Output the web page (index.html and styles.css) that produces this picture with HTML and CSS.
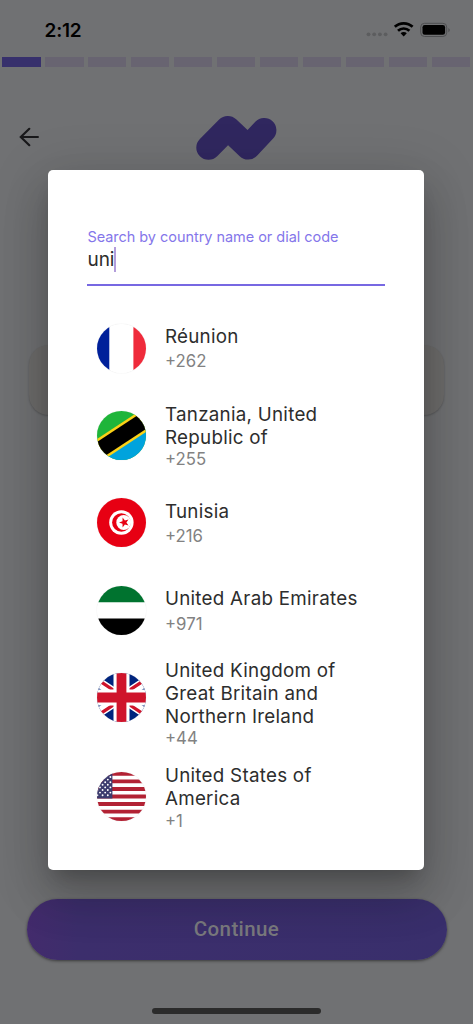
FILE: index.html
```html
<!DOCTYPE html>
<html lang="en">
<head>
<meta charset="utf-8">
<title>Select country</title>
<link rel="stylesheet" href="styles.css">
</head>
<body>
<div class="screen">
  <header class="status">
    <span class="time">2:12</span>
    <svg class="status-icons" width="90" height="20" viewBox="0 0 90 20">
      <g fill="#5c5d5f"><circle cx="5.5" cy="15.3" r="1.9"/><circle cx="11.2" cy="15.3" r="1.9"/><circle cx="16.9" cy="15.3" r="1.9"/><circle cx="22.6" cy="15.3" r="1.9"/></g>
      <g fill="none" stroke="#000" stroke-width="2.7"><path d="M31.8 7.8a13.1 13.1 0 0 1 17.8 0"/><path d="M35 11.8a8.2 8.2 0 0 1 11.4 0"/></g>
      <path d="M37.6 14.2a4.4 4.4 0 0 1 6.2 0L40.7 17.4z"/>
      <rect x="57.7" y="4.3" width="26" height="13.2" rx="3.8" fill="none" stroke="#4e4f51"/>
      <rect x="59.5" y="6" width="22.6" height="9.8" rx="2.2"/>
      <path d="M85.4 9v4.2c1.8-.8 1.8-3.4 0-4.2z" fill="#4e4f51"/>
    </svg>
  </header>
  <div class="progress"><i class="done"></i><i></i><i></i><i></i><i></i><i></i><i></i><i></i><i></i><i></i><i></i></div>
  <nav class="topbar">
    <svg class="back" width="22" height="22" viewBox="0 0 22 22" fill="none" stroke="#18181a" stroke-width="2.2" stroke-linecap="round" stroke-linejoin="round"><path d="M19.9 11H2.6M11.3 2.8L2.8 11l8.5 8.2"/></svg>
    <svg class="logo" width="82" height="46" viewBox="0 0 82 46" fill="none" stroke="#30275f" stroke-width="24.4" stroke-linecap="round" stroke-linejoin="round"><path d="M13.5 32.6L32.8 13.2L53.1 32.4L69.2 15.2"/></svg>
  </nav>
  <div class="phone-field"></div>
  <button class="continue">Continue</button>
  <div class="home-bar"></div>

  <section class="dialog">
    <div class="search">
      <label class="search-label">Search by country name or dial code</label>
      <div class="search-value"><span>uni</span><i class="caret"></i></div>
    </div>
    <ul class="countries">
      <li class="row single">
        <svg class="flag" viewBox="0 0 49 49"><path fill="#fff" d="M0 0h49v49H0z"/><path fill="#00209a" d="M0 0h12.3v49H0z"/><path fill="#ef2b3b" d="M36.4 0H49v49H36.4z"/></svg>
        <div><p class="name">Réunion</p><p class="code">+262</p></div>
      </li>
      <li class="row double">
        <svg class="flag" viewBox="0 0 49 49"><path fill="#1fb53a" d="M0 0h49v49H0z"/><path fill="#00a3dd" d="M49 8v41H0V41z"/><path stroke="#fcd116" stroke-width="21" d="M-8 45.9L57 3.1"/><path stroke="#000" stroke-width="16" d="M-8 45.9L57 3.1"/></svg>
        <div><p class="name">Tanzania, United<br>Republic of</p><p class="code">+255</p></div>
      </li>
      <li class="row single">
        <svg class="flag" viewBox="0 0 49 49"><path fill="#e70013" d="M0 0h49v49H0z"/><circle cx="24.4" cy="24.5" r="12.2" fill="#fff"/><circle cx="24.4" cy="24.5" r="9.3" fill="#e70013"/><circle cx="26.7" cy="24.5" r="7.4" fill="#fff"/><path fill="#e70013" d="M22 24.5l3.5-1.2.1-3.8 2.3 3 3.6-1.1-2.1 3.1 2.1 3.1-3.6-1.1-2.3 3-.1-3.8z"/></svg>
        <div><p class="name">Tunisia</p><p class="code">+216</p></div>
      </li>
      <li class="row single">
        <svg class="flag" viewBox="0 0 49 49"><path fill="#fff" d="M0 0h49v49H0z"/><path fill="#00732f" d="M0 0h49v16.2H0z"/><path d="M0 32.5h49V49H0z"/></svg>
        <div><p class="name">United Arab Emirates</p><p class="code">+971</p></div>
      </li>
      <li class="row triple">
        <svg class="flag" viewBox="0 0 49 49"><path fill="#00247d" d="M0 0h49v49H0z"/><path stroke="#fff" stroke-width="9.6" d="M-12.5 0l74 49M61.5 0l-74 49"/><g stroke="#cf142b" stroke-width="3.2"><path d="M24.5 26.6L-12.5 51M24.5 22.4L61.5-2M24.5 22.5L-12.5-2M24.5 26.5L61.5 51"/></g><path stroke="#fff" stroke-width="16" d="M24.5 0v49M0 24.5h49"/><path stroke="#cf142b" stroke-width="9.8" d="M24.5 0v49M0 24.5h49"/></svg>
        <div><p class="name">United Kingdom of<br>Great Britain and<br>Northern Ireland</p><p class="code">+44</p></div>
      </li>
      <li class="row double">
        <svg class="flag" viewBox="0 0 49 49"><path fill="#fff" d="M0 0h49v49H0z"/><path stroke="#b22234" stroke-width="3.77" d="M0 1.9h49M0 9.4h49M0 17h49M0 24.5h49M0 32h49M0 39.6h49M0 47.1h49"/><path fill="#3c3b6e" d="M0 0h15.4v26.4H0z"/><g stroke="#fff" stroke-width="1.9" stroke-linecap="round" stroke-dasharray="0 5.2"><path d="M3 5h12M.4 7.6h15M3 10.2h12M.4 12.8h15M3 15.4h12M.4 18h15M3 20.6h12M.4 23.2h15"/></g></svg>
        <div><p class="name">United States of<br>America</p><p class="code">+1</p></div>
      </li>
    </ul>
  </section>
</div>
</body>
</html>
```
FILE: styles.css
```css
* { box-sizing: border-box; }
body { margin: 0; font-family: Inter, "Liberation Sans", sans-serif; }
p, ul { margin: 0; padding: 0; list-style: none; }
svg { display: block; }

.screen {
  position: relative;
  display: flex;
  flex-direction: column;
  width: 473px;
  height: 1024px;
  overflow: hidden;
  background: #707173;
}
.status {
  display: flex;
  justify-content: space-between;
  align-items: center;
  height: 57px;
  padding: 4px 20px 0 44.5px;
}
.time { font-size: 19px; font-weight: 600; line-height: 24px; letter-spacing: -0.2px; }
.status-icons { margin-top: -3px; }
.progress {
  display: grid;
  grid-template-columns: repeat(11, 1fr);
  gap: 4.7px;
  height: 10px;
  padding: 0 2.8px 0 2.3px;
}
.progress i { background: #686471; }
.progress .done { background: #37306c; }
.topbar {
  display: flex;
  align-items: center;
  height: 142px;
  padding: 0 18px;
}
.back { margin-top: -2px; }
.logo { margin-left: 155px; }
.phone-field {
  height: 70px;
  margin: 136px 29px 0;
  border-radius: 20px;
  background: #6d6c6b;
  box-shadow: 0 1px 2px rgba(0, 0, 0, .22);
}
.continue {
  height: 61px;
  margin: 484px 26.5px 0;
  padding: 0;
  border: 0;
  border-radius: 31px;
  background: linear-gradient(90deg, #432b6c, #3c2e6c 12%, #392f6c);
  box-shadow: 0 1px 3px rgba(0, 0, 0, .5);
  color: #79797d;
  font: 500 20.5px/61px Roboto, sans-serif;
  letter-spacing: .4px;
}
.home-bar {
  width: 169px;
  height: 6px;
  margin: 48px auto 0;
  border-radius: 3px;
  background: #2b2b2b;
}

/* Modal shown above the dimmed page */
.dialog {
  position: absolute;
  left: 48.4px;
  top: 169.5px;
  width: 376px;
  height: 700.3px;
  padding: 57.5px 39px 0;
  border-radius: 5px;
  background: #fff;
  box-shadow: 0 13px 18px -8px rgba(0, 0, 0, .2), 0 28px 45px 4px rgba(0, 0, 0, .14), 0 11px 54px 9px rgba(0, 0, 0, .12);
}
.search { height: 59px; border-bottom: 2px solid #7768e2; }
.search-label {
  display: block;
  color: #8476ea;
  font-size: 14.5px;
  line-height: 19px;
  letter-spacing: -.04px;
  white-space: nowrap;
}
.search-value {
  display: flex;
  align-items: center;
  height: 26px;
  color: #2d2d2d;
  font-size: 19px;
}
.caret { width: 2px; height: 25px; margin-left: -.7px; background: #b39ddb; }
.countries { padding-top: 18.5px; }
.row {
  display: flex;
  gap: 18.9px;
  height: 87.4px;
  padding: 0 0 0 9.7px;
}
.row.single { padding-top: 20.5px; }
.row.double { padding-top: 10.9px; }
.row.triple { height: 99.2px; padding-top: 5px; }
.flag {
  flex: none;
  width: 49px;
  height: 49px;
  margin-top: 7.9px;
  border-radius: 50%;
  box-shadow: 0 0 1px rgba(0, 0, 0, .2);
}
.single .flag { margin-top: -1.5px; }
.triple .flag { margin-top: 13.8px; }
.name {
  color: #2d2d2d;
  font-size: 18.8px;
  line-height: 23px;
  letter-spacing: .26px;
  white-space: nowrap;
}
.code { color: #828282; font-size: 16.8px; line-height: 21px; }
.single .code { margin-top: 3.4px; }
.double .code, .triple .code { margin-top: .4px; }
```
